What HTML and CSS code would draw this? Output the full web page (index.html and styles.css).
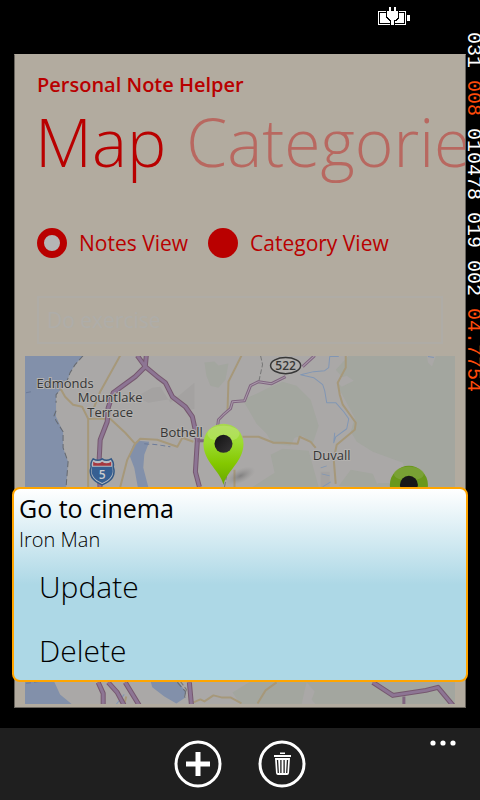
FILE: index.html
```html
<!DOCTYPE html>
<html lang="en">
<head>
<meta charset="utf-8">
<meta name="viewport" content="width=device-width, initial-scale=1">
<title>Personal Note Helper</title>
<link rel="stylesheet" href="styles.css">
</head>
<body>
<header class="status">
  <svg class="battery" viewBox="0 0 32 18" width="32" height="18" shape-rendering="crispEdges" aria-label="Charging">
    <path d="M0 4h28v14H0zM29 8h3v6h-3z" fill="#fff"/>
    <path d="M1 5h26v12H1z" fill="#000"/>
    <path d="M2 6h24v10H2z" fill="#fff"/>
    <path d="M8 4h13v7l-3 3h-1v4h-5v-4h-1l-3-3z" fill="#000"/>
    <path d="M11 0h2v4h3V0h2v4h2v6l-3 3h-1v5h-3v-5h-1l-3-3V4h2z" fill="#fff"/>
  </svg>
</header>

<main class="page">
  <p class="app-name">Personal Note Helper</p>
  <nav class="pivot">
    <a class="pivot-item current" href="#map">Map</a>
    <a class="pivot-item" href="#categories">Categories</a>
  </nav>

  <form class="filters">
    <div class="views">
      <label class="view"><input type="radio" name="view" checked>Notes View</label>
      <label class="view"><input type="radio" name="view">Category View</label>
    </div>
    <select class="note-select" aria-label="Note"><option>Do exercise</option></select>
  </form>

  <div class="map" id="map">
    <svg class="map-canvas" viewBox="25 356 429 348" preserveAspectRatio="xMidYMid slice" role="img" aria-label="Map of notes">
      <defs>
        <linearGradient id="pin" x1="0" y1="0" x2="0" y2="1">
          <stop offset="0" stop-color="#a8d850"/><stop offset=".3" stop-color="#9cdc30"/><stop offset=".65" stop-color="#84c800"/><stop offset="1" stop-color="#68a800"/>
        </linearGradient>
        <linearGradient id="hole" x1="0" y1="0" x2="1" y2="1">
          <stop offset="0" stop-color="#111"/><stop offset="1" stop-color="#383638"/>
        </linearGradient>
        <radialGradient id="shade"><stop offset="0" stop-color="#666" stop-opacity=".6"/><stop offset="1" stop-color="#888" stop-opacity="0"/></radialGradient>
      </defs>
      <path class="land" d="M25 356h429v348H25z"/>
      <path class="forest" d="M348 356H454V704H240l-8-12 20-12V487l22-14-4-18 12-6 26 2 10 36h50l10-4 30 0-6-20-30-11-16-10-6-10 4-14-12-22-6-12 8-4-9-10zM268 388l14-6 14 4 14 14 8 26-6 18-10-8-8 2-4 8-18-2-6-10-10-10-8-14-6-10 14-6zM204 363l10-1 4 4 10-2-3 16-7 8-8-2-4-10zM350 470l22 4 6 14-40-2z"/>
      <path class="town" d="M152 388l8-1 10 16 24-20v26l-8 2-14-12-24 4-12-6zM320 472h9v16h-9z"/>
      <path class="land" d="M306 682l8 9-3 8 4 5h-14l3-14zM334 380l12-4 7 5-12 6zM426 356h9l-4 11-4-4z"/>
      <path class="water" d="M25 356H83l-8 9-5 8-3 8-5 7-6 7v22l7 15v16l5 14-2 25-2 195-11-3 7 15 12 10H25zM133 445l5-4 11 1-5 13-1 13 5 19 3 8h-12l-5-27-5-13zM150 680h27l8 11v6l-9 6-12-7-12-9z"/>
      <path class="shore" d="M83 356l-8 9-5 8-3 8-5 7-6 7v8M56 411l-2 5 2 5 7 11v16l5 14-2 25M177 682l8 9v6"/>
      <path class="ferry" d="M26 393l6-1M38 389l22-2M26 683l14-2M144 444l14 1 12 2"/>
      <path class="stream" d="M338 357h-9l-1 11-4 3-11 1-13 3 13 3 9 7 2 6 2 12h9l8 9 5 7-2 10-11 8-2 6 1-10M326 466l-6 2M321 474l8 2M330 482l-8 5M427 357l6 1M116 704l8-10"/>
      <path class="rail" d="M260 356l2 9-2 9-2 9M224 487l2-10 1-14M180 681l6 8-2 8"/>
      <path class="lane" d="M120 356l-20 36-7 18M60 388l5 9 8 8 9 2 6 12h22l15 14 10 11 5-5 17 1 20 7 5-9 11 4M88 419v70M135 444l-8 16-7 27M241 356l-13 26-1 30M242 437h16l15 6h10l14 1 2-7 11 5 5 6M345 356v12l-8 15 2 12 3 10 13 18-1 7-18 15-3 14 2 25M193 702l7-3 4 2 9-6 8 2h9l11 6M257 703l8-13 11-8M234 470v17M124 704l2-8"/>
      <path class="road-edge" d="M137 356l8 11 1-11M145 367l-10 10-22 16-5 15-1 14-7 18-1 20 1 34M145 367l12 10 8 6 7 14 13 10 7 10 5 23-2 32 4 15M98 682l5 11v12M108 682l9 10 7 13M125 682l14 23M189 682l2 22M372 682l20 13 33-5 12-3 15 18"/>
      <path class="road-fill" d="M137 356l8 11 1-11M145 367l-10 10-22 16-5 15-1 14-7 18-1 20 1 34M145 367l12 10 8 6 7 14 13 10 7 10 5 23-2 32 4 15M98 682l5 11v12M108 682l9 10 7 13M125 682l14 23M189 682l2 22M372 682l20 13 33-5 12-3 15 18"/>
      <path class="minor-edge" d="M197 441h12M217 428l1-8 5-5 7-6 2-7 12-1 6-15 8-4 13 2 14-7M302 367l12-11M403 696v8"/>
      <path class="minor-fill" d="M217 428l1-8 5-5 7-6 2-7 12-1 6-15 8-4 13 2 14-7M302 367l12-11"/>
      <g transform="translate(102 471)">
        <path d="M-9-12Q-4-9 0-12Q4-9 9-12Q12-8 11-4Q15 8 0 14Q-15 8-11-4Q-12-8-9-12z" fill="#b8bcc2" stroke="#335885" stroke-width="1.5"/>
        <path d="M-10-4H10Q13 7 0 12Q-13 7-10-4z" fill="#365f92"/>
        <path d="M-9-9Q-4-6 0-9Q4-6 9-9V-5H-9z" fill="#a63840"/>
        <text class="shield" x="0" y="8">5</text>
      </g>
      <ellipse cx="285" cy="366" rx="15" ry="8" fill="#b1afad" stroke="#373737" stroke-width="1.5"/>
      <text class="shield-dark" x="285" y="370">522</text>
      <g class="place">
        <text x="65" y="388">Edmonds</text>
        <text x="110" y="402">Mountlake</text>
        <text x="110" y="417">Terrace</text>
        <text x="181" y="437">Bothell</text>
        <text x="331" y="460">Duvall</text>
      </g>
      <ellipse cx="240" cy="476" rx="16" ry="7" fill="url(#shade)" transform="rotate(-25 240 476)"/>
      <path d="M223 485c-3-14-20-23-20-41a20 20 0 0 1 40 0c0 18-17 27-20 41z" fill="url(#pin)"/>
      <ellipse cx="223" cy="434" rx="16" ry="8" fill="#d4ee9c" opacity=".3"/>
      <circle cx="223" cy="444" r="9" fill="url(#hole)"/>
      <path d="M408 526c-4-14-19-23-19-41a19 19 0 0 1 38 0c0 18-15 27-19 41z" fill="#6a981c"/>
      <ellipse cx="408" cy="474" rx="15" ry="7" fill="#88aa4c" opacity=".5"/>
      <circle cx="408" cy="485" r="9" fill="#181818"/>
    </svg>
    <section class="popup" role="dialog" aria-labelledby="note-title">
      <h1 class="note-title" id="note-title">Go to cinema</h1>
      <p class="note-text">Iron Man</p>
      <button class="action" type="button">Update</button>
      <button class="action" type="button">Delete</button>
    </section>
  </div>
</main>

<footer class="appbar">
  <button class="round" type="button" aria-label="Add">
    <svg viewBox="0 0 48 48" width="48" height="48"><circle cx="24" cy="24" r="22" fill="none" stroke="#fff" stroke-width="3"/><path d="M24 12v24M12 24h24" stroke="#fff" stroke-width="5"/></svg>
  </button>
  <button class="round" type="button" aria-label="Delete note">
    <svg viewBox="0 0 48 48" width="48" height="48"><circle cx="24" cy="24" r="22" fill="none" stroke="#fff" stroke-width="3"/><path d="M22 12.500h5v1.500h-5zM16 15h17v2H16zM17 18h15l-1 15q-.3 2-2 2h-9q-1.700 0-2-2z" fill="#fff"/><path d="M19.500 20l.8 13M22.900 20v13M26.100 20v13M29.500 20l-.8 13" stroke="#1f1f1f" stroke-width="1.300"/></svg>
  </button>
  <button class="more" type="button" aria-label="More"><svg viewBox="0 0 26 6" width="26" height="6" fill="#fff"><circle cx="3" cy="3" r="2.600"/><circle cx="13" cy="3" r="2.600"/><circle cx="23" cy="3" r="2.600"/></svg></button>
</footer>

<aside class="counters">031 <b>008</b> 010478 019 002 <b>04.7754</b></aside>
</body>
</html>
```
FILE: styles.css
```css
* { box-sizing: border-box; }
body {
  margin: 0;
  min-height: 100vh;
  display: flex;
  flex-direction: column;
  position: relative;
  background: #000;
  color: #b90000;
  font-family: "Open Sans", "Noto Sans", sans-serif;
  overflow-x: hidden;
}
p, h1 { margin: 0; }
button { border: 0; padding: 0; background: none; color: inherit; font: inherit; }

.status { display: flex; justify-content: flex-end; height: 54px; padding: 7px 70px 0 0; }
.battery { display: block; }

.page {
  flex: 1;
  display: flex;
  flex-direction: column;
  margin: 0 14px 20px;
  padding: 18px 10px 3px;
  border: 1px solid #68645d;
  border-top-color: #b2ab9f;
  background: #b2ab9f;
}
.app-name { padding-left: 12px; font-size: 20px; line-height: 24px; font-weight: 600; }
.pivot {
  display: flex;
  gap: 20px;
  margin-right: -10px;
  padding-left: 10px;
  overflow: hidden;
  font-size: 66px;
  line-height: 88px;
  font-weight: 300;
}
.pivot-item { color: #b86860; text-decoration: none; }
.pivot-item.current { color: #b90000; }

.filters { padding: 43px 12px 12px; }
.views { display: flex; gap: 20px; }
.view { display: flex; align-items: center; gap: 12px; font-size: 21px; line-height: 30px; }
.view input {
  appearance: none;
  width: 30px;
  height: 30px;
  margin: 0;
  border-radius: 50%;
  background: #b90000;
}
.view input:checked { border: 7px solid #b90000; background: #b5b5b5; }
.note-select {
  appearance: none;
  display: block;
  width: 100%;
  height: 48px;
  margin-top: 38px;
  padding: 0 8px;
  border: 2px solid #afaca6;
  border-radius: 0;
  background: none;
  color: #aeada9;
  font: 21px "Open Sans", "Noto Sans", sans-serif;
}

.map { flex: 1; position: relative; display: flex; min-height: 348px; }
.map-canvas { display: block; flex: 1; width: 100%; height: 348px; }
.land { fill: #aaa8a7; }
.forest { fill: #a3a69f; }
.town { fill: #a4a2a1; }
.water { fill: #8290aa; }
.shore, .ferry, .stream, .rail, .lane, .road-edge, .road-fill, .minor-edge, .minor-fill { fill: none; stroke-linejoin: round; }
.shore { stroke: #666a70; stroke-dasharray: 6 3; }
.ferry { stroke: #6d7b98; stroke-dasharray: 5 3; }
.stream { stroke: #8196b4; }
.rail { stroke: #777; stroke-dasharray: 5 2; }
.lane { stroke: #a6987a; stroke-width: 2; }
.road-edge { stroke: #76586f; stroke-width: 5; }
.road-fill { stroke: #8d7594; stroke-width: 3; }
.minor-edge { stroke: #806580; stroke-width: 3; }
.minor-fill { stroke: #a99aaa; stroke-width: 1; }
.place text {
  fill: #363636;
  stroke: #b3b1af;
  stroke-width: 2px;
  paint-order: stroke;
  font-size: 13px;
  text-anchor: middle;
}
.shield, .shield-dark { font-size: 12px; font-weight: 600; text-anchor: middle; fill: #ccc; }
.shield-dark { fill: #373737; }

.popup {
  position: absolute;
  left: -13px;
  right: -13px;
  bottom: 22px;
  padding: 2px 5px 0;
  height: 195px;
  border: 2px solid #ffa500;
  border-radius: 8px;
  background: linear-gradient(#fff, #add8e6 50%);
  color: #000;
}
.note-title { font-size: 25px; line-height: 34px; font-weight: 400; }
.note-text { font-size: 20px; line-height: 30px; font-weight: 300; }
.action { display: block; width: 100%; padding-left: 20px; font-size: 30px; line-height: 64px; font-weight: 300; text-align: left; }

.appbar {
  display: flex;
  justify-content: center;
  gap: 36px;
  position: relative;
  height: 72px;
  padding-top: 12px;
  background: #1f1f1f;
}
.round, .round svg, .more svg { display: block; height: auto; }
.round { width: 48px; height: 48px; }
.more { position: absolute; top: 12px; right: 24px; }

.counters {
  position: absolute;
  top: 32px;
  right: 0;
  width: 14px;
  writing-mode: vertical-rl;
  font: 20px/14px "Liberation Mono", monospace;
  color: #fff;
  white-space: nowrap;
}
.counters b { font-weight: 400; color: #ff4b0a; }
```
